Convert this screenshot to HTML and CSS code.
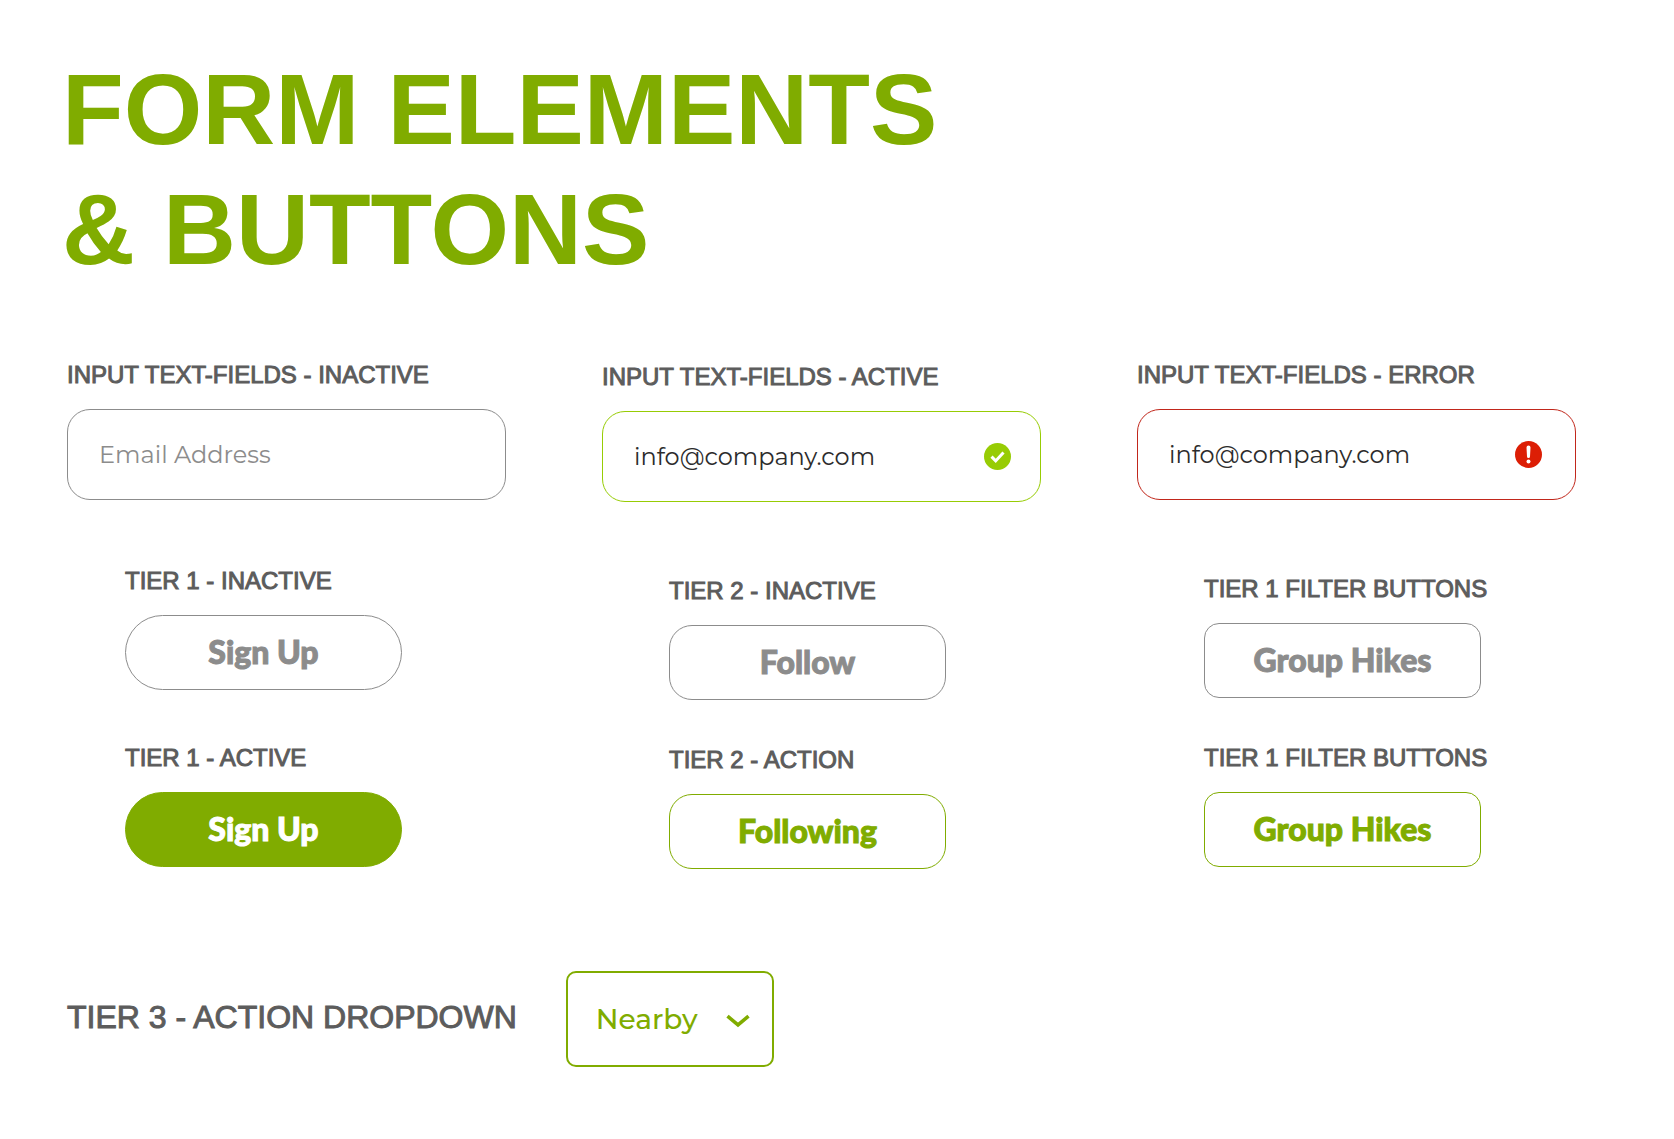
FILE: index.html
```html
<!DOCTYPE html>
<html lang="en">
<head>
  <meta charset="utf-8">
  <meta name="viewport" content="width=device-width, initial-scale=1">
  <title>Form Elements &amp; Buttons</title>
  <link rel="stylesheet" href="styles.css">
</head>
<body>
  <main class="page">
    <h1 class="title">FORM ELEMENTS<br>&amp; BUTTONS</h1>

    <div class="columns">
      <section class="column column--pill">
        <div class="group">
          <label class="label" for="email-inactive">INPUT TEXT-FIELDS - INACTIVE</label>
          <div class="field">
            <input class="field__input" id="email-inactive" type="email" placeholder="Email Address">
          </div>
        </div>
        <div class="actions">
          <div class="group">
            <h2 class="label" id="tier1-inactive">TIER 1 - INACTIVE</h2>
            <button class="button button--pill" type="button" aria-describedby="tier1-inactive">Sign Up</button>
          </div>
          <div class="group">
            <h2 class="label" id="tier1-active">TIER 1 - ACTIVE</h2>
            <button class="button button--pill button--solid" type="button" aria-describedby="tier1-active">Sign Up</button>
          </div>
        </div>
      </section>

      <section class="column column--middle">
        <div class="group">
          <label class="label" for="email-active">INPUT TEXT-FIELDS - ACTIVE</label>
          <div class="field field--active">
            <input class="field__input" id="email-active" type="email" value="info@company.com">
            <svg class="field__icon" viewBox="0 0 27 27" aria-hidden="true">
              <circle cx="13.5" cy="13.5" r="13.5" fill="#97cc04"/>
              <path d="M7.5 13.6l4.200 4.300 7.800-8.400" fill="none" stroke="#fff" stroke-width="3"/>
            </svg>
          </div>
        </div>
        <div class="actions">
          <div class="group">
            <h2 class="label" id="tier2-inactive">TIER 2 - INACTIVE</h2>
            <button class="button button--rounded" type="button" aria-describedby="tier2-inactive">Follow</button>
          </div>
          <div class="group">
            <h2 class="label" id="tier2-action">TIER 2 - ACTION</h2>
            <button class="button button--rounded button--green" type="button" aria-describedby="tier2-action">Following</button>
          </div>
        </div>
      </section>

      <section class="column">
        <div class="group">
          <label class="label" for="email-error">INPUT TEXT-FIELDS - ERROR</label>
          <div class="field field--error">
            <input class="field__input" id="email-error" type="email" value="info@company.com" aria-invalid="true">
            <svg class="field__icon" viewBox="0 0 27 27" aria-hidden="true">
              <circle cx="13.5" cy="13.5" r="13.5" fill="#dc1e05"/>
              <path d="M11.5 6.4a2 2 0 0 1 4 0l-.5 9.2a1.5 1.5 0 0 1-3 0z" fill="#fff"/>
              <circle cx="13.5" cy="20.5" r="2" fill="#fff"/>
            </svg>
          </div>
        </div>
        <div class="actions">
          <div class="group">
            <h2 class="label" id="filter-off">TIER 1 FILTER BUTTONS</h2>
            <button class="button" type="button" aria-pressed="false" aria-describedby="filter-off">Group Hikes</button>
          </div>
          <div class="group">
            <h2 class="label" id="filter-on">TIER 1 FILTER BUTTONS</h2>
            <button class="button button--green" type="button" aria-pressed="true" aria-describedby="filter-on">Group Hikes</button>
          </div>
        </div>
      </section>
    </div>

    <div class="dropdown-row">
      <label class="label label--large" for="range">TIER 3 - ACTION DROPDOWN</label>
      <div class="dropdown">
        <select class="dropdown__select" id="range">
          <option>Nearby</option>
        </select>
        <svg class="dropdown__chevron" viewBox="0 0 24 14" aria-hidden="true">
          <path d="M1.500 2.200L12 10.800 22.500 2.200" fill="none" stroke="#80ac00" stroke-width="3.600"/>
        </svg>
      </div>
    </div>
  </main>
</body>
</html>
```
FILE: styles.css
```css
:root {
  --green: #80ac00;
  --lime: #97cc04;
  --red: #c1271b;
  --gray: #8c8c8c;
  --label: #5c5c5c;
  --ink: #2c2c2c;
  --heading-font: "Helvetica Neue", "Liberation Sans", Arial, sans-serif;
  --body-font: Montserrat, Inter, sans-serif;
  --button-font: "Museo Sans", Lato, sans-serif;
}

* {
  box-sizing: border-box;
}

body {
  margin: 0;
  background: #fff;
  font-family: var(--body-font);
}

.page {
  padding: 49px 98px 72px 62px;
}

.title {
  margin: 0 0 72px;
  color: var(--green);
  font: 700 101px/120px var(--heading-font);
}

.columns {
  display: grid;
  grid-template-columns: repeat(3, minmax(0, 1fr));
  gap: 96px;
  padding-left: 5px;
}

.column {
  display: flex;
  flex-direction: column;
  gap: 75px;
}

.column--pill {
  gap: 67px;
}

.column--middle {
  padding-top: 2px;
}

.actions {
  display: flex;
  flex-direction: column;
  gap: 46px;
  padding-left: 67px;
}

.column--pill .actions {
  gap: 54px;
  padding-left: 58px;
}

.group {
  display: flex;
  flex-direction: column;
  gap: 20px;
}

.label {
  margin: 0;
  color: var(--label);
  font: 400 24px/28px var(--heading-font);
  white-space: nowrap;
  -webkit-text-stroke: 1px var(--label);
}

.label--large {
  padding-bottom: 5px;
  font-size: 32px;
  line-height: 40px;
}

.field {
  display: flex;
  align-items: center;
  gap: 16px;
  height: 91px;
  padding: 0 29px 0 31px;
  border: 1px solid var(--gray);
  border-radius: 23px;
}

.field--active {
  border-color: var(--lime);
}

.field--error {
  padding-right: 33px;
  border-color: var(--red);
}

.field__input {
  flex: 1;
  min-width: 0;
  height: 100%;
  padding: 0;
  border: 0;
  outline: 0;
  background: none;
  color: var(--ink);
  font: 400 24px/32px var(--body-font);
}

.field__input::placeholder {
  color: var(--gray);
  opacity: 1;
}

.field__icon {
  flex: none;
  width: 27px;
  height: 27px;
}

.button {
  width: 277px;
  height: 75px;
  padding: 0 0 2px;
  border: 1px solid var(--gray);
  border-radius: 15px;
  background: none;
  color: var(--gray);
  font: 900 32px/36px var(--button-font);
  -webkit-text-stroke: 1px currentColor;
}

.button--rounded {
  border-radius: 23px;
}

.button--pill {
  border-radius: 38px;
}

.button--green {
  border-color: var(--green);
  color: var(--green);
}

.button--solid {
  border-color: var(--green);
  background: var(--green);
  color: #fff;
}

.dropdown-row {
  display: flex;
  align-items: center;
  gap: 49px;
  margin-top: 102px;
  padding-left: 5px;
}

.dropdown {
  display: grid;
  align-items: center;
  width: 208px;
}

.dropdown__select,
.dropdown__chevron {
  grid-area: 1 / 1;
}

.dropdown__select {
  width: 100%;
  height: 96px;
  padding: 0 56px 0 28px;
  border: 2px solid var(--green);
  border-radius: 10px;
  appearance: none;
  background: none;
  color: var(--green);
  font: 500 28px/36px var(--body-font);
}

.dropdown__chevron {
  justify-self: end;
  width: 24px;
  height: 14px;
  margin: 4px 24px 0 0;
  pointer-events: none;
}
```
